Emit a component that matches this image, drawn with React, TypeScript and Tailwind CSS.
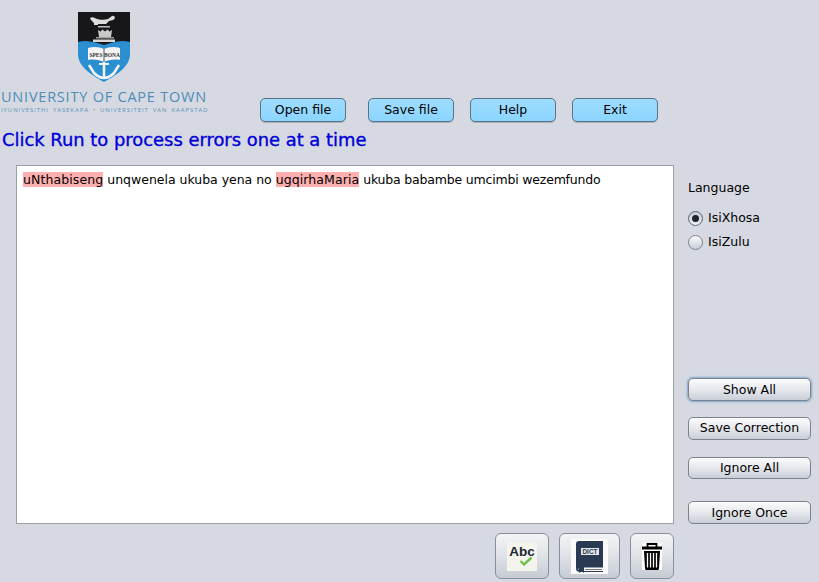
const blueBtn =
  "h-[24px] w-[86px] rounded-[5px] border border-[#5b7186] bg-gradient-to-b from-[#9fdcff] to-[#8ad5ff] text-[12.5px] text-black shadow-[0_1px_0_#aab0bb]"

const sideBtn =
  "h-[23px] w-[123px] rounded-[5px] border border-[#7b828d] bg-gradient-to-b from-[#fbfbfc] via-[#e6e8ec] to-[#c9ced7] pt-[1px] text-[12.5px] text-black"

const toolBtn =
  "flex h-[46px] items-center justify-center rounded-[6px] border border-[#8a9099] bg-gradient-to-b from-[#f3f4f6] via-[#dfe2e7] to-[#c6cbd4]"

function Crest() {
  return (
    <svg width="52" height="70" viewBox="0 0 52 70">
      <path d="M0 0H52V42C52 55 38 63 26 70C14 63 0 55 0 42Z" fill="#2a8fd0" />
      <path d="M0 0H52V30C42 27 33 31 26 33C19 31 10 27 0 30Z" fill="#17171a" />
      <path d="M12 6c3-2 5 0 7 1 3 1 8 1 11 0l4-3c3-1 4 3 1 4l-4 1-3 3h-8v1h-4v-2l-3-3z" fill="#dcdcdc" />
      <path d="M20 14h12v1.500H20z" fill="#bdbdbd" />
      <path d="M21 25h12l1-7 -2.500 1.500-2-2-2.500 2-2.500-2-2 2-2.500-1.500z" fill="#c9c9c9" />
      <rect x="18" y="25" width="18" height="1.500" fill="#9d9d9d" />
      <rect x="15" y="27.500" width="22" height="2.500" fill="#d8d8d8" />
      <path d="M10 36c6-2 12-1 16 1 4-2 10-3 16-1v12c-6-1-12 0-16 2-4-2-10-3-16-2z" fill="#f4f4f4" />
      <text x="18" y="45" textAnchor="middle" fontSize="5.500" fontWeight="700" fontFamily="'Liberation Serif', serif" fill="#333">SPES</text>
      <text x="34" y="45" textAnchor="middle" fontSize="5.500" fontWeight="700" fontFamily="'Liberation Serif', serif" fill="#333">BONA</text>
      <path d="M26 37v13" stroke="#555" strokeWidth="1" />
      <path d="M26 50v16M11 53l5 8c3 3 7 5 10 5s7-2 10-5l5-8" stroke="#f4f4f4" strokeWidth="2.500" fill="none" />
      <path d="M21 52h10" stroke="#f4f4f4" strokeWidth="2" />
    </svg>
  )
}

function Logo() {
  return (
    <div className="flex w-[260px] flex-col pl-[1px] pt-[12px]">
      <div className="pl-[77px]">
        <Crest />
      </div>
      <div className="mt-[6px] whitespace-nowrap font-['Open_Sans',sans-serif] text-[14.5px] leading-[17px] tracking-[0.78px] text-[#4d8db8]">
        UNIVERSITY OF CAPE TOWN
      </div>
      <div className="mt-[1px] whitespace-nowrap font-['Open_Sans',sans-serif] text-[6px] leading-[8px] tracking-[0.92px] [word-spacing:1.5px] text-[#5a93ba]">
        IYUNIVESITHI YASEKAPA • UNIVERSITEIT VAN KAAPSTAD
      </div>
    </div>
  )
}

function AbcIcon() {
  return (
    <div className="relative h-[29px] w-[30px] bg-[#f4f4ef] text-center">
      <span className="block pt-[3px] font-['Liberation_Sans',sans-serif] text-[13.5px] leading-[13px] font-bold text-[#20262e]">
        Abc
      </span>
      <svg className="absolute top-[14px] left-[12px]" width="14" height="10" viewBox="0 0 14 10">
        <path d="M1.500 5l3.500 3.500 7.500-7" stroke="#6fbf4a" strokeWidth="2.400" fill="none" />
      </svg>
    </div>
  )
}

function DictIcon() {
  return (
    <svg width="37" height="35" viewBox="0 0 37 35">
      <rect width="37" height="35" fill="#fafafa" />
      <path d="M8 2H32V28H9C7 28 5 29 5 30V5C5 3 6 2 8 2Z" fill="#2b3a53" />
      <path d="M5 30c0-2 2-3 4-3h23v1.500H10c-1.500 0-2.500 .5-2.500 1.500s1 2 2.500 2h22v1H9c-2 0-4-1-4-3z" fill="#2b3a53" />
      <rect x="10" y="9" width="18" height="7" fill="#e6e8ec" />
      <text x="19" y="15" textAnchor="middle" fontSize="6.500" fontWeight="700" fontFamily="'Liberation Sans', sans-serif" fill="#2b3a53">DICT</text>
      <path d="M8 28h5v6l-2.500-2-2.500 2z" fill="#2b3a53" />
      <path d="M14 30.500h17" stroke="#777" strokeWidth="1" />
    </svg>
  )
}

function TrashIcon() {
  return (
    <svg width="20" height="27" viewBox="0 0 20 27">
      <rect width="20" height="27" fill="#fff" />
      <path d="M5.500 4V1h9v3" fill="none" stroke="#000" strokeWidth="1.800" />
      <rect x="0" y="3.500" width="20" height="3" fill="#000" />
      <path d="M2 8h16l-1 17.500a1.500 1.500 0 0 1-1.500 1.500H4.500A1.500 1.500 0 0 1 3 25.500z" fill="#000" />
      <path d="M5.500 10v14.500M8.500 10v14.500M11.500 10v14.500M14.500 10v14.500" stroke="#fff" strokeWidth="1.300" />
    </svg>
  )
}

export default function App() {
  return (
    <div className="h-[582px] w-[819px] overflow-hidden bg-[#d6d9e1] font-['DejaVu_Sans',sans-serif] text-[12.5px] text-black">
      <div className="flex h-[126px]">
        <Logo />
        <div className="flex items-start pt-[98px]">
          <button className={blueBtn}>Open file</button>
          <button className={`${blueBtn} ml-[22px]`}>Save file</button>
          <button className={`${blueBtn} ml-[16px]`}>Help</button>
          <button className={`${blueBtn} ml-[16px]`}>Exit</button>
        </div>
      </div>

      <h1 className="pl-[2px] text-[17.9px] leading-[27px] font-normal whitespace-nowrap text-[#0000d8] [-webkit-text-stroke:0.35px_#0000d8]">
        Click Run to process errors one at a time
      </h1>

      <div className="mt-[12px] flex pl-[16px]">
        <div className="h-[359px] w-[658px] border border-[#9a9ea6] bg-white px-[6px] pt-[5px] leading-[17px] whitespace-nowrap">
          <span className="bg-[#ffafaf] tracking-[0.1px]">uNthabiseng</span>{" "}
          <span className="tracking-[-0.02px]">unqwenela ukuba yena no</span>{" "}
          <span className="bg-[#ffafaf] tracking-[0.08px]">ugqirhaMaria</span>{" "}
          <span className="tracking-[-0.19px]">ukuba babambe umcimbi wezemfundo</span>
        </div>

        <div className="ml-[14px] flex h-[359px] w-[123px] flex-col">
          <div className="pt-[14px] leading-[17px]">Language</div>
          <label className="mt-[13px] flex h-[18px] items-center gap-[5px]">
            <span className="flex h-[15px] w-[15px] items-center justify-center rounded-full border border-[#5f6670] bg-gradient-to-b from-[#c3cad6] to-[#eef0f3]">
              <span className="h-[7px] w-[7px] rounded-full bg-[#20252c]" />
            </span>
            IsiXhosa
          </label>
          <label className="mt-[6px] flex h-[18px] items-center gap-[5px]">
            <span className="h-[15px] w-[15px] rounded-full border border-[#7b828d] bg-gradient-to-b from-[#fbfbfc] to-[#c9ced7]" />
            IsiZulu
          </label>

          <button className={`${sideBtn} mt-[127px] border-[#4f6f92] shadow-[0_0_2px_1px_#7fa8cf]`}>Show All</button>
          <button className={`${sideBtn} mt-[16px]`}>Save Correction</button>
          <button className={`${sideBtn} mt-[17px]`}>Ignore All</button>
          <button className={`${sideBtn} mt-[22px]`}>Ignore Once</button>
        </div>
      </div>

      <div className="mt-[9px] flex w-[674px] justify-end gap-[10px]">
        <button className={`${toolBtn} w-[54px]`}>
          <AbcIcon />
        </button>
        <button className={`${toolBtn} w-[61px]`}>
          <DictIcon />
        </button>
        <button className={`${toolBtn} w-[44px]`}>
          <TrashIcon />
        </button>
      </div>
    </div>
  )
}
